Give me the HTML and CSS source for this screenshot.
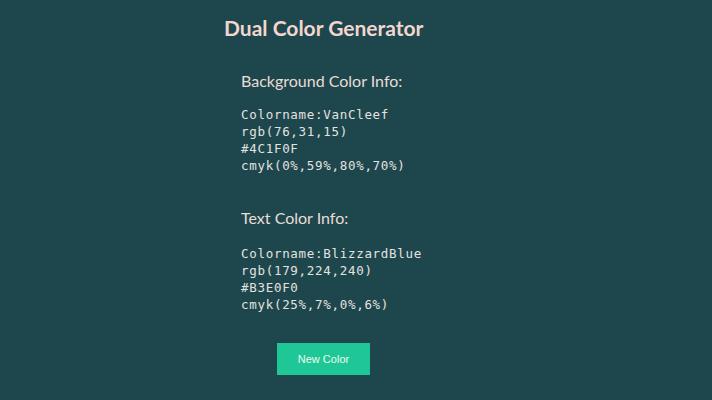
FILE: index.html
```html
<!DOCTYPE html>
<html>
<head>
<meta charset="utf-8">
<link rel="stylesheet" href="styles.css">
</head>
<body>
<div class="page">
  <h1 class="title">Dual Color Generator</h1>
  <section class="info">
    <h2 class="info-head">Background Color Info:</h2>
    <div class="info-lines">
      <div>Colorname:VanCleef</div>
      <div>rgb(76,31,15)</div>
      <div>#4C1F0F</div>
      <div>cmyk(0%,59%,80%,70%)</div>
    </div>
  </section>
  <section class="info">
    <h2 class="info-head">Text Color Info:</h2>
    <div class="info-lines">
      <div>Colorname:BlizzardBlue</div>
      <div>rgb(179,224,240)</div>
      <div>#B3E0F0</div>
      <div>cmyk(25%,7%,0%,6%)</div>
    </div>
  </section>
  <div class="actions">
    <button class="btn">New Color</button>
  </div>
</div>
</body>
</html>
```
FILE: styles.css
```css
html, body {
  margin: 0;
  padding: 0;
}
body {
  background: #1d474c;
  width: 712px;
  height: 400px;
  overflow: hidden;
}
.page {
  padding-left: 224px;
  padding-top: 14px;
  display: flex;
  flex-direction: column;
}
.title {
  margin: 0;
  font-family: Lato, sans-serif;
  font-weight: 700;
  font-size: 21px;
  line-height: 28px;
  color: #f2d6cf;
}
.info {
  padding-left: 17px;
  margin-top: 29px;
}
.info + .info {
  margin-top: 34px;
}
.info + .info .info-lines {
  margin-top: 17px;
}
.info-head {
  margin: 0;
  font-family: Lato, sans-serif;
  font-weight: 400;
  font-size: 16px;
  line-height: 20px;
  color: #eadcd6;
}
.info-lines {
  margin-top: 15px;
  font-family: "DejaVu Sans Mono", monospace;
  font-size: 12.5px;
  line-height: 17px;
  letter-spacing: 0.7px;
  color: #e4e2e0;
}
.actions {
  padding-left: 53px;
  margin-top: 30px;
}
.btn {
  width: 93px;
  height: 32px;
  border: none;
  background: #1fc797;
  color: #eefaf5;
  font-family: "Liberation Sans", Arial, sans-serif;
  font-size: 11px;
  padding: 0;
}
```
